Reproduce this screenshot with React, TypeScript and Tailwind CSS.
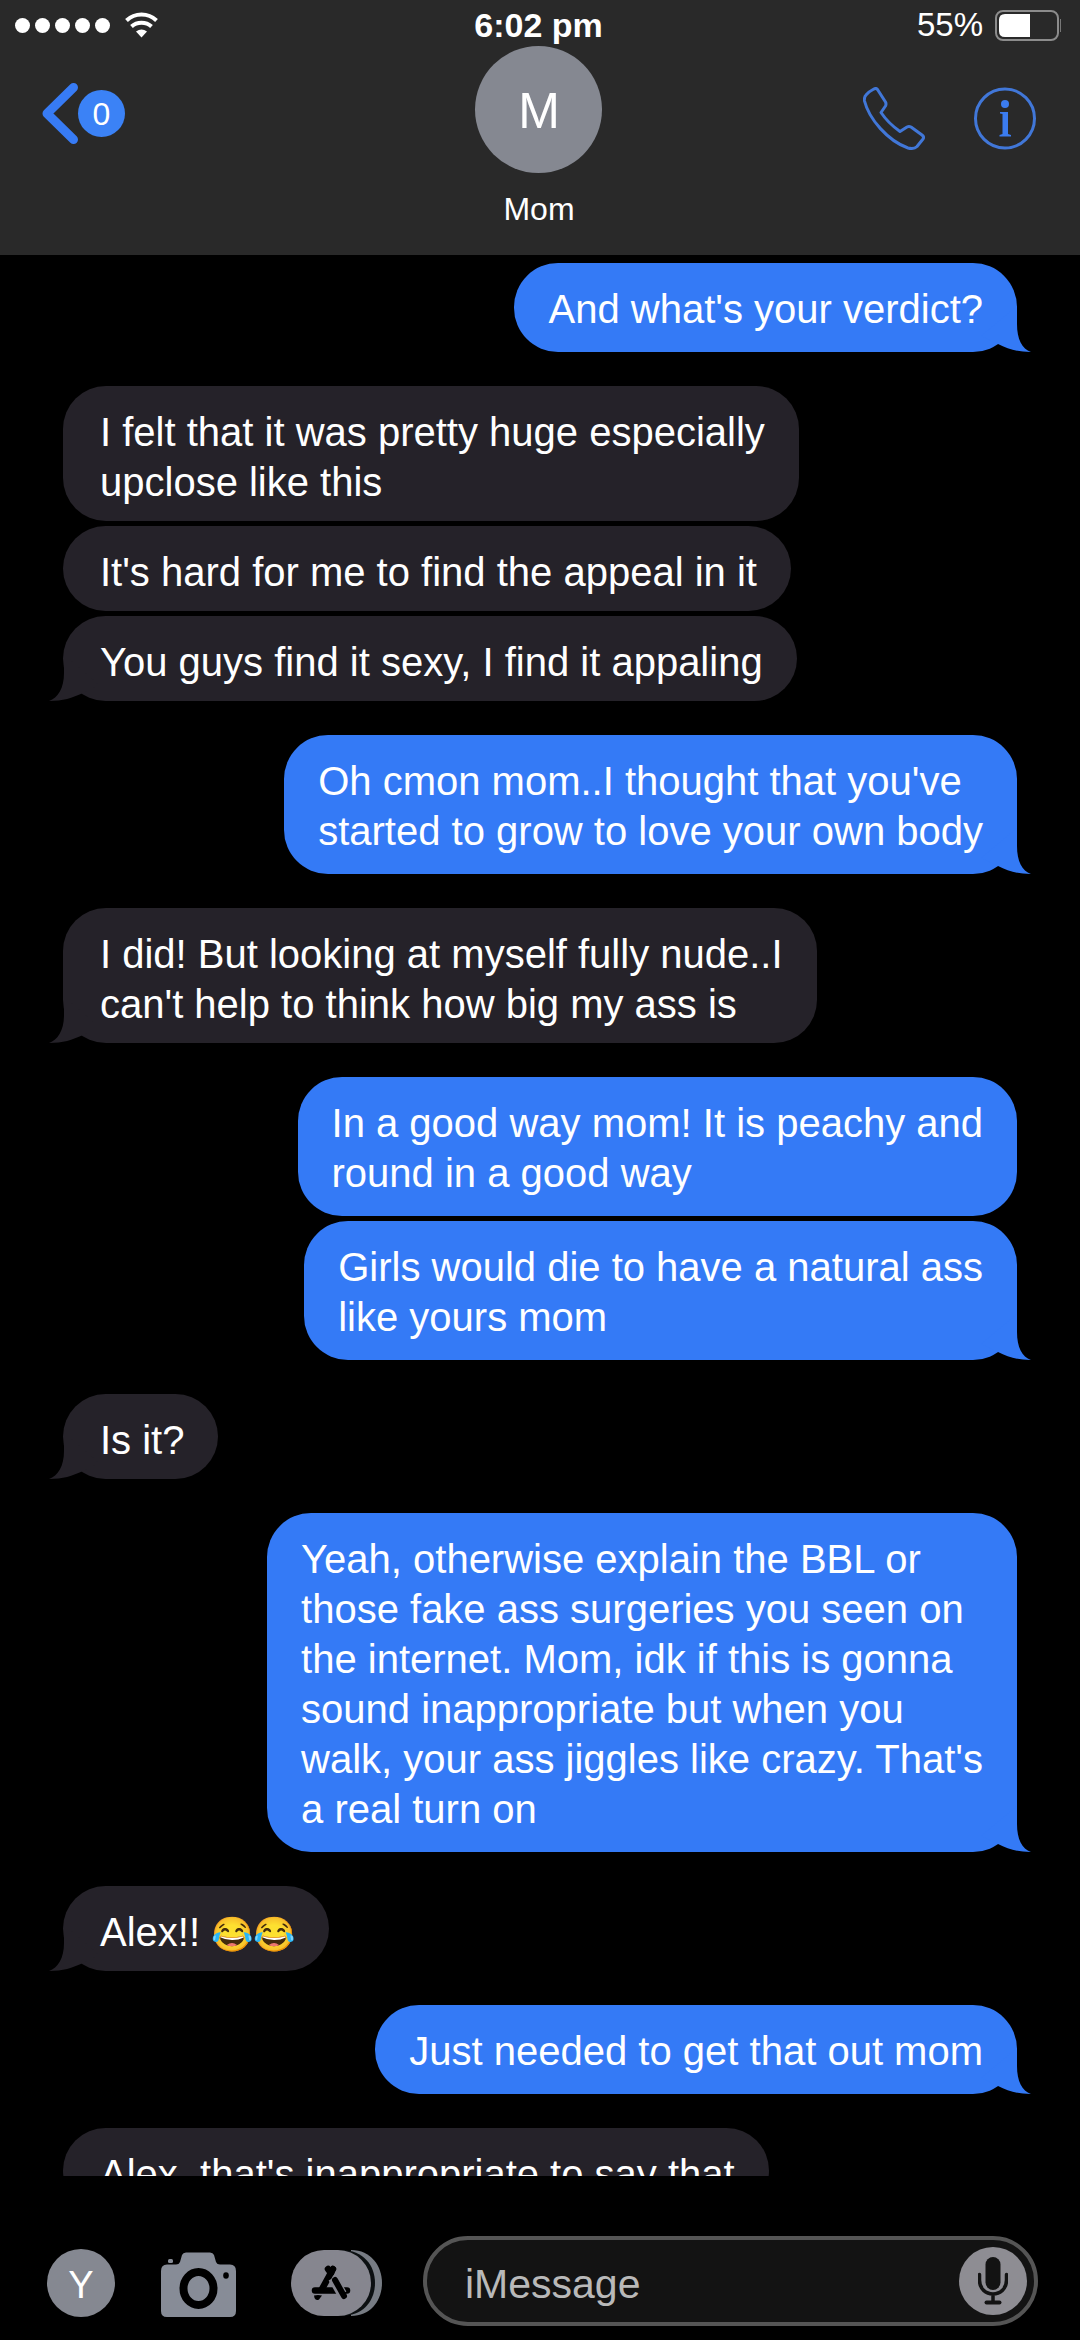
interface Group {
  from: "me" | "them";
  texts: string[];
  emoji?: string;
}

const groups: Group[] = [
  { from: "me", texts: ["And what's your verdict?"] },
  {
    from: "them",
    texts: [
      "I felt that it was pretty huge especially\nupclose like this",
      "It's hard for me to find the appeal in it",
      "You guys find it sexy, I find it appaling",
    ],
  },
  { from: "me", texts: ["Oh cmon mom..I thought that you've\nstarted to grow to love your own body"] },
  { from: "them", texts: ["I did! But looking at myself fully nude..I\ncan't help to think how big my ass is"] },
  {
    from: "me",
    texts: [
      "In a good way mom! It is peachy and\nround in a good way",
      "Girls would die to have a natural ass\nlike yours mom",
    ],
  },
  { from: "them", texts: ["Is it?"] },
  {
    from: "me",
    texts: [
      "Yeah, otherwise explain the BBL or\nthose fake ass surgeries you seen on\nthe internet. Mom, idk if this is gonna\nsound inappropriate but when you\nwalk, your ass jiggles like crazy. That's\na real turn on",
    ],
  },
  { from: "them", texts: ["Alex!! "], emoji: "😂😂" },
  { from: "me", texts: ["Just needed to get that out mom"] },
  { from: "them", texts: ["Alex, that's inappropriate to say that"] },
];

function Tail({ mine }: { mine: boolean }) {
  if (mine) {
    return (
      <svg className="absolute -right-[14px] bottom-0" width="50" height="46" viewBox="0 0 50 46" aria-hidden="true">
        <path d="M0 30 L36 0 V18 C36 33 41 43 50 46 C36 46 27 43 17 38 Z" fill="#347af6" />
      </svg>
    );
  }
  return (
    <svg className="absolute bottom-0 -left-[14px]" width="50" height="46" viewBox="0 0 50 46" aria-hidden="true">
      <path d="M50 30 L15 0 V18 C15 33 9 43 0 46 C14 46 23 43 34 38 Z" fill="#252229" />
    </svg>
  );
}

function Bubble({ text, emoji, mine, last }: { text: string; emoji?: string; mine: boolean; last: boolean }) {
  return (
    <div
      className={
        mine
          ? "relative self-end rounded-[44px] bg-[#347af6] pt-[21px] pr-[34px] pb-[18px] pl-[34px]"
          : "relative self-start rounded-[43px] bg-[#252229] pt-[21px] pr-[34px] pb-[14px] pl-[37px]"
      }
    >
      {last && <Tail mine={mine} />}
      <p className="relative whitespace-pre text-[40px] leading-[50px]">
        {text}
        {emoji && <span className="text-[34px] leading-10">{emoji}</span>}
      </p>
    </div>
  );
}

function StatusBar() {
  return (
    <div className="grid h-[46px] grid-cols-3 items-center pt-1 pr-[18px] pl-[15px]">
      <div className="flex items-center gap-[5px]">
        {[0, 1, 2, 3, 4].map((n) => (
          <span key={n} className="size-[15px] rounded-full bg-white" />
        ))}
        <svg className="ml-2.5" width="33" height="26" viewBox="0 0 33 26" aria-label="Wi-Fi">
          <g fill="none" stroke="#fff" strokeWidth="4">
            <path d="M1.500 8.500 C10 0.500 23 0.500 31.500 8.500" />
            <path d="M6.500 14.500 C12 9.500 21 9.500 26.500 14.500" />
          </g>
          <path d="M11 19.500 Q16.500 15.500 22 19.500 L16.500 25.500 Z" fill="#fff" />
        </svg>
      </div>
      <time className="text-center text-[34px] leading-10 font-bold">6:02 pm</time>
      <div className="flex items-center justify-end gap-3">
        <span className="text-[33px] leading-10">55%</span>
        <svg width="67" height="31" viewBox="0 0 67 31" aria-label="Battery">
          <rect x="1" y="1" width="62" height="29" rx="7" fill="none" stroke="#8c8c8c" strokeWidth="2" />
          <path d="M10 4 H35 V27 H10 Q4 27 4 21 V10 Q4 4 10 4 Z" fill="#fff" />
          <path d="M65.500 9 V22" stroke="#777" />
        </svg>
      </div>
    </div>
  );
}

function Header() {
  return (
    <header className="h-[255px] shrink-0 bg-[#292929]">
      <StatusBar />
      <div className="grid grid-cols-3 items-start pr-[44px] pl-[42px]">
        <button type="button" aria-label="Back" className="mt-[37px] flex items-center">
          <svg width="36" height="61" viewBox="0 0 36 61" aria-hidden="true">
            <path d="M31.500 4.500 L5 30.500 L31.500 56.500" fill="none" stroke="#377bf5" strokeWidth="9" strokeLinecap="round" strokeLinejoin="round" />
          </svg>
          <span className="flex size-[47px] items-center justify-center rounded-full bg-[#3b82f6] text-[32px] leading-10">0</span>
        </button>
        <div className="flex flex-col items-center">
          <div className="flex size-[127px] items-center justify-center rounded-full bg-[#858891] pt-1 text-[50px]">M</div>
          <h1 className="mt-4 text-[32px] leading-10">Mom</h1>
        </div>
        <div className="mt-[41px] flex justify-end gap-[49px]">
          <button type="button" aria-label="Call">
            <svg width="62" height="63" viewBox="0 0 62 63" fill="none" stroke="#4177d8" strokeWidth="3" strokeLinejoin="round" aria-hidden="true">
              <path d="M10 2.500 Q13 0.500 14.500 2.500 L22.500 15 Q23.500 17 22.500 19 L18 25.500 Q25 36 37 44.500 L44 40 Q46 39 48 40 L59 48 Q61.500 50 60 52 L54 59.500 Q51 62.500 45 61 C25 54 6 32 1.500 14 Q1 10 3 8 Q6 4.500 10 2.500 Z" />
            </svg>
          </button>
          <button type="button" aria-label="Details">
            <svg width="62" height="63" viewBox="0 0 62 63" aria-hidden="true">
              <circle cx="31" cy="31.500" r="29.500" fill="none" stroke="#4177d8" strokeWidth="3" />
              <circle cx="31" cy="17" r="4" fill="#3b7cf0" />
              <path d="M26 25 H34 V47 L37 48 V49.500 H25.500 V48 L28.500 47 V27 L26 26.500 Z" fill="#3b7cf0" />
            </svg>
          </button>
        </div>
      </div>
    </header>
  );
}

function Composer() {
  return (
    <form className="flex shrink-0 items-center pt-[60px] pr-[42px] pb-[14px] pl-[47px]">
      <button type="button" aria-label="Profile" className="mt-1 flex size-[68px] shrink-0 items-center justify-center rounded-full bg-[#858891] pt-1 text-[38px]">
        Y
      </button>
      <button type="button" aria-label="Camera" className="mt-2 ml-[46px] shrink-0">
        <svg width="75" height="66" viewBox="0 0 75 66" aria-hidden="true">
          <path d="M0 19 Q0 12.500 6 12.500 H15 Q18 12.500 19 10 L21 3 Q22 0.500 25 0.500 H49 Q52 0.500 53 3 L55 10 Q56 12.500 59 12.500 H69 Q75 12.500 75 19 V59 Q75 65 69 65 H6 Q0 65 0 59 Z" fill="#878c97" />
          <rect x="7" y="7" width="5" height="4" rx="1.500" fill="#878c97" />
          <ellipse cx="37.500" cy="36.500" rx="15" ry="16.500" fill="none" stroke="#000" strokeWidth="8" />
          <ellipse cx="65" cy="23.500" rx="2.800" ry="3.200" fill="#000" />
        </svg>
      </button>
      <button type="button" aria-label="Apps" className="mt-1 ml-[55px] shrink-0">
        <svg width="92" height="68" viewBox="0 0 92 68" aria-hidden="true">
          <path d="M60 1 C80 1 91 17 91 34 C91 51 80 67 60 67 Z" fill="#777c84" />
          <path d="M50 1 C73 1 84 17 84 34 C84 51 73 67 50 67 Z" fill="#0c1012" />
          <rect x="0" y="1" width="80" height="66" rx="33" fill="#86868f" />
          <g stroke="#000" strokeWidth="6.500" strokeLinecap="round">
            <path d="M24 41.500 H56" />
            <path d="M42 20 L31 40" />
            <path d="M37 20 L40 24" />
          </g>
          <path d="M42 29 L51 45" stroke="#86868f" strokeWidth="10" />
          <path d="M44 31 L53 47 M42 20 L39 25" stroke="#000" strokeWidth="6" strokeLinecap="round" />
          <path d="M23 46.500 Q27 45.500 31 46.500 L28 50.500 Q25 52 23.500 49 Z" fill="#000" />
        </svg>
      </button>
      <div className="ml-[40px] flex h-[90px] min-w-0 flex-1 items-center rounded-[45px] border-4 border-[#555] bg-[#131313] pr-[7px] pl-[38px]">
        <input
          type="text"
          aria-label="Message"
          placeholder="iMessage"
          className="h-[60px] w-0 min-w-0 flex-1 bg-transparent pt-1.5 text-[41px] leading-[50px] outline-none placeholder:text-[#b9b9b9]"
        />
        <button type="button" aria-label="Dictate" className="flex size-[68px] shrink-0 items-center justify-center rounded-full bg-[#8e8d93]">
          <svg width="30" height="48" viewBox="0 0 30 48" aria-hidden="true">
            <rect x="7.500" y="0" width="15" height="33" rx="7.500" fill="#131313" />
            <path d="M1.500 17.500 V23 C1.500 32 8 37 15 37 C22 37 28.500 32 28.500 23 V17.500 M15 37 V45" fill="none" stroke="#131313" strokeWidth="3.500" strokeLinecap="round" />
            <path d="M8.500 45.500 H21.500" stroke="#131313" strokeWidth="4" strokeLinecap="round" />
          </svg>
        </button>
      </div>
    </form>
  );
}

export default function App() {
  return (
    <div className="flex h-screen flex-col overflow-hidden bg-black font-['Liberation_Sans',Arial,sans-serif] text-white">
      <Header />
      <main className="flex min-h-0 flex-1 flex-col gap-[34px] overflow-hidden px-[63px] pt-2">
        {groups.map((group, i) => (
          <div key={i} className="flex shrink-0 flex-col gap-[5px]">
            {group.texts.map((text, j) => (
              <Bubble key={j} text={text} emoji={group.emoji} mine={group.from === "me"} last={j === group.texts.length - 1} />
            ))}
          </div>
        ))}
      </main>
      <Composer />
    </div>
  );
}
